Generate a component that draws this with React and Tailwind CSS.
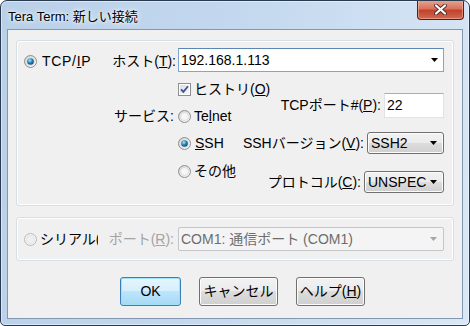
// Tera Term "new connection" dialog, Windows 7 look
const font = "font-['Liberation_Sans','Noto_Sans_CJK_JP',sans-serif]";

function Radio({ checked, disabled }) {
  return (
    <svg width="13" height="13" viewBox="0 0 13 13" className="shrink-0">
      <defs>
        <linearGradient id="rfill" x1="0" y1="0" x2="1" y2="1">
          <stop offset="0" stopColor="#cfcfcf" />
          <stop offset="1" stopColor="#fdfdfd" />
        </linearGradient>
        <radialGradient id="rdot" cx="0.4" cy="0.35" r="0.7">
          <stop offset="0" stopColor="#b4f0ff" />
          <stop offset="0.45" stopColor="#2f8fc2" />
          <stop offset="1" stopColor="#0b3a5c" />
        </radialGradient>
      </defs>
      <circle cx="6.5" cy="6.5" r="6" fill={disabled ? "#f4f4f4" : "url(#rfill)"} stroke={disabled ? "#b8b8b8" : "#8e8f8f"} />
      <circle cx="6.5" cy="6.5" r="4" fill={disabled ? "#f0f0f0" : "#f6f6f6"} stroke={disabled ? "#e0e0e0" : "#d8d8d8"} strokeWidth="0.8" />
      {checked && <circle cx="6.5" cy="6.5" r="3.3" fill="url(#rdot)" />}
    </svg>
  );
}

function Checkbox() {
  return (
    <svg width="13" height="13" viewBox="0 0 13 13" className="shrink-0">
      <defs>
        <linearGradient id="cfill" x1="0" y1="0" x2="1" y2="1">
          <stop offset="0" stopColor="#d9dde6" />
          <stop offset="1" stopColor="#f7f8fb" />
        </linearGradient>
      </defs>
      <rect x="0.5" y="0.5" width="12" height="12" fill="#fff" stroke="#8f8f8f" />
      <rect x="2" y="2" width="9" height="9" fill="url(#cfill)" />
      <path d="M3 6.3 L5.4 8.9 L10 3.3" fill="none" stroke="#3d5595" strokeWidth="1.8" />
    </svg>
  );
}

function Arrow({ color = "#000" }) {
  return (
    <svg width="7" height="4" viewBox="0 0 7 4" className="shrink-0">
      <path d="M0 0 H7 L3.5 4 Z" fill={color} />
    </svg>
  );
}

function DropButton({ width, text }) {
  return (
    <div
      className={`${width} h-[22px] flex items-center justify-between pl-[3px] pr-[6px] rounded-[3px] border border-[#707070] bg-[linear-gradient(#f2f2f2_0%,#ebebeb_50%,#dddddd_50%,#cfcfcf_100%)] shadow-[inset_0_0_0_1px_#fcfcfc]`}
    >
      <span className="whitespace-nowrap overflow-hidden">{text}</span>
      <Arrow />
    </div>
  );
}

function Button({ width, children, primary }) {
  return (
    <div
      className={
        primary
          ? `${width} h-[29px] flex items-center justify-center rounded-[3px] border border-[#3c7fb1] bg-[linear-gradient(#e5f5fd_0%,#d5effc_50%,#bce5fc_50%,#a6d9f4_100%)] shadow-[inset_0_0_0_1px_#9ee2fa]`
          : `${width} h-[29px] flex items-center justify-center rounded-[3px] border border-[#707070] bg-[linear-gradient(#f2f2f2_0%,#ebebeb_50%,#dddddd_50%,#cfcfcf_100%)] shadow-[inset_0_0_0_1px_#fcfcfc]`
      }
    >
      {children}
    </div>
  );
}

export default function App() {
  return (
    <div
      className={`w-[470px] h-[326px] flex flex-col border border-[#2a3b4f] rounded-t-[7px] rounded-b-[5px] overflow-hidden bg-[linear-gradient(100deg,#b9d0e9_0%,#c3d8ee_45%,#cfe0f2_75%,#d9e7f6_100%)] shadow-[inset_0_0_0_1px_rgba(255,255,255,0.45)] text-[14px] text-black ${font}`}
    >
      {/* title bar */}
      <div className="h-[28px] flex items-start justify-between pl-[7px]">
        <span className="mt-[8px] text-[13px] leading-[16px] [text-shadow:0_0_6px_#fff,0_0_3px_#fff]">
          Tera Term: 新しい接続
        </span>
        <div className="-mt-px mr-[5px] w-[47px] h-[20px] flex items-center justify-center rounded-b-[4px] border border-[#5a1d14] border-t-0 bg-[linear-gradient(#e8a893_0%,#d8735e_45%,#c2432b_55%,#cf6a50_100%)] shadow-[inset_0_0_0_1px_rgba(255,200,180,0.5)]">
          <svg width="13" height="11" viewBox="0 0 13 11">
            <path d="M2 1.5 L11 9.5 M11 1.5 L2 9.5" stroke="#5a2a24" strokeWidth="4" strokeLinecap="round" />
            <path d="M2 1.5 L11 9.5 M11 1.5 L2 9.5" stroke="#fff" strokeWidth="2.2" strokeLinecap="round" />
          </svg>
        </div>
      </div>

      {/* client area */}
      <div className="mx-[6px] h-[290px] border border-[#8297b0] bg-[#f0f0f0] flex flex-col pl-[8px] pt-[10px]">
        {/* TCP/IP group */}
        <div className="w-[438px] h-[166px] rounded-[3px] border border-[#d5dfe5] shadow-[inset_0_0_0_1px_#fff] flex flex-col pr-[9px]">
          <div className="mt-[7px] h-[24px] flex items-center">
            <div className="w-[90px] pl-[7px] pt-[2px] flex items-center gap-[5px]">
              <Radio checked />
              <span className="tracking-[0.7px]">
                TCP/<u>I</u>P
              </span>
            </div>
            <div className="w-[71px] pr-[2px] pt-[2px] text-right whitespace-nowrap">
              ホスト(<u>T</u>):
            </div>
            <div className="w-[266px] h-[24px] flex items-center justify-between pl-[2px] pr-[5px] bg-white border border-[#7ea6cf] border-t-[#5b87b6]">
              <span>192.168.1.113</span>
              <Arrow />
            </div>
          </div>

          <div className="mt-[3px] flex">
            <div className="w-[161px] flex flex-col">
              <div className="h-[28px]" />
              <div className="h-[27px] flex items-center justify-end pr-[4px] whitespace-nowrap">サービス:</div>
            </div>
            <div className="w-[60px] flex flex-col whitespace-nowrap">
              <div className="h-[28px] flex items-center gap-[3px]">
                <Checkbox />
                <span>
                  ヒストリ(<u>O</u>)
                </span>
              </div>
              <div className="h-[27px] flex items-center gap-[3px]">
                <Radio />
                <span>
                  Te<u>l</u>net
                </span>
              </div>
              <div className="h-[26px] flex items-center gap-[4px]">
                <Radio checked />
                <span>
                  <u>S</u>SH
                </span>
              </div>
              <div className="h-[30px] flex items-center gap-[3px]">
                <Radio />
                <span>その他</span>
              </div>
            </div>
            <div className="flex-1 flex flex-col items-end pt-[18px] whitespace-nowrap">
              <div className="h-[25px] flex items-center gap-[3px]">
                <span>
                  TCPポート#(<u>P</u>):
                </span>
                <div className="w-[60px] h-[25px] flex items-center pl-[2px] bg-white border border-[#dfe3e8] border-t-[#abadb3]">
                  22
                </div>
              </div>
              <div className="mt-[14px] h-[22px] flex items-center gap-[3px]">
                <span>
                  SSHバージョン(<u>V</u>):
                </span>
                <DropButton width="w-[77px]" text="SSH2" />
              </div>
              <div className="mt-[17px] h-[22px] flex items-center gap-[3px]">
                <span>
                  プロトコル(<u>C</u>):
                </span>
                <DropButton width="w-[80px]" text="UNSPEC" />
              </div>
            </div>
          </div>
        </div>

        {/* serial group */}
        <div className="mt-[11px] w-[438px] h-[44px] rounded-[3px] border border-[#d5dfe5] shadow-[inset_0_0_0_1px_#fff] flex items-center pr-[9px]">
          <div className="w-[90px] pl-[7px] flex items-center gap-[3px]">
            <Radio disabled />
            <span className="w-[58px] overflow-hidden whitespace-nowrap">
              シリアル(<u>E</u>)
            </span>
          </div>
          <div className="w-[71px] pr-[4px] text-right whitespace-nowrap text-[#a3a3a3]">
            ポート(<u>R</u>):
          </div>
          <div className="w-[266px] h-[24px] flex items-center justify-between pl-[2px] pr-[6px] rounded-[2px] bg-[#f4f4f4] border border-[#c3c7cb] text-[#6d6d6d] whitespace-nowrap">
            <span>COM1: 通信ポート (COM1)</span>
            <Arrow color="#a6a6a6" />
          </div>
        </div>

        {/* buttons */}
        <div className="mt-[16px] ml-[104px] flex gap-[18px]">
          <Button width="w-[61px]" primary>
            OK
          </Button>
          <Button width="w-[79px]">キャンセル</Button>
          <Button width="w-[69px]">
            ヘルプ(<u>H</u>)
          </Button>
        </div>
      </div>
    </div>
  );
}
